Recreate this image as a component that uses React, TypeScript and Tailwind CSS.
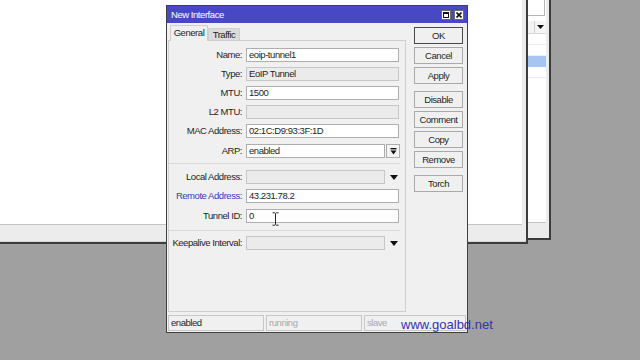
import React from "react";

type FieldProps = {
  value?: string;
  disabled?: boolean;
  short?: boolean;
};

function Field({ value = "", disabled = false, short = false }: FieldProps) {
  return (
    <div
      className={
        "h-[14px] border px-[2px] leading-[12px] whitespace-nowrap overflow-hidden " +
        (short ? "w-[139px] " : "w-[153px] ") +
        (disabled ? "bg-[#ebebeb] border-[#c6c6c6]" : "bg-white border-[#aeaeae]")
      }
    >
      {value}
    </div>
  );
}

function Row({
  label,
  blue = false,
  className = "",
  children,
}: {
  label: string;
  blue?: boolean;
  className?: string;
  children: React.ReactNode;
}) {
  return (
    <div className={"flex items-center h-[14px] " + className}>
      <div
        className={
          "w-[73px] text-right whitespace-nowrap leading-[14px] " +
          (blue ? "text-[#3a3ab6]" : "text-[#1e1e1e]")
        }
      >
        {label}
      </div>
      <div className="ml-[4px] flex items-center">{children}</div>
    </div>
  );
}

function DropButton() {
  return (
    <div className="ml-[1px] w-[14px] h-[14px] border border-[#aeaeae] bg-[#f4f4f4] flex items-center justify-center">
      <svg width="7" height="7" viewBox="0 0 7 7">
        <rect x="0.5" y="0" width="6" height="1.4" fill="#111" />
        <path d="M0.5 2.6h6L3.5 6.4z" fill="#111" />
      </svg>
    </div>
  );
}

function Arrow() {
  return (
    <svg className="ml-[5px]" width="8" height="5" viewBox="0 0 8 5">
      <path d="M0 0h8L4 5z" fill="#111" />
    </svg>
  );
}

function Btn({ label, main = false, className = "" }: { label: string; main?: boolean; className?: string }) {
  return (
    <div
      className={
        "h-[17px] border bg-[#f0f0f0] text-center leading-[15px] text-[#1e1e1e] " +
        (main ? "border-[#4a4a4a] " : "border-[#a9a9a9] ") +
        className
      }
    >
      {label}
    </div>
  );
}

function MainWindow() {
  return (
    <div className="absolute left-[-4px] top-[-4px] w-[532px] h-[248px] flex flex-col bg-[#ececec] border-r-2 border-b-2 border-[#3c3c3c]">
      <div className="flex-1 mr-[4px] bg-white border-b border-[#c4c4c4]" />
      <div className="h-[17px] border-b border-[#d6d6d6]" />
    </div>
  );
}

function ListWindow() {
  return (
    <div className="absolute left-[470px] top-[-4px] w-[81px] h-[244px] flex flex-col bg-[#ececec] border-r-2 border-b-2 border-[#3c3c3c]">
      <div className="mr-[3px] flex-1 flex flex-col bg-white border-b border-[#c4c4c4]">
        <div className="h-[20px] border border-[#b4b4b4] mr-[1px]" />
        <div className="h-[5px]" />
        <div className="h-[13px] flex bg-[#f4f4f4] border-b border-[#d8d8d8]">
          <div className="flex-1" />
          <div className="w-[12px] border-l border-[#d0d0d0] flex items-center justify-center">
            <svg width="7" height="4" viewBox="0 0 7 4">
              <path d="M0 0h7L3.5 4z" fill="#111" />
            </svg>
          </div>
        </div>
        <div className="h-[11px] border-b border-[#eeeeee]" />
        <div className="h-[11px] border-b border-[#eeeeee]" />
        <div className="h-[11px] bg-[#a7c5f2]" />
        <div className="h-[11px] border-b border-[#eeeeee]" />
      </div>
      <div className="h-[15px]" />
    </div>
  );
}

function Dialog() {
  return (
    <div className="absolute left-[166px] top-[5px] w-[302px] h-[328px] flex flex-col border border-[#404040] bg-[#f0f0f0]">
      <div className="h-[17px] flex items-center pl-[4px] pr-[3px] bg-[#4848c4] text-white">
        <span className="leading-[17px]">New Interface</span>
        <div className="ml-auto flex gap-[3px]">
          <div className="w-[10px] h-[10px] bg-white border border-[#6a6a6a] flex items-center justify-center">
            <div className="w-[6px] h-[6px] border border-t-2 border-[#111]" />
          </div>
          <div className="w-[10px] h-[10px] bg-white border border-[#6a6a6a] flex items-center justify-center">
            <svg width="6" height="6" viewBox="0 0 6 6">
              <path d="M0.5 0.5L5.5 5.5M5.5 0.5L0.5 5.5" stroke="#111" strokeWidth="1.6" />
            </svg>
          </div>
        </div>
      </div>

      <div className="flex-1 flex">
        <div className="w-[238px] ml-[1px] mb-[3px] flex flex-col">
          <div className="h-[17px] flex items-end pl-[2px]">
            <div className="h-[16px] w-[38px] -mb-[1px] z-10 border border-b-0 border-[#cfcfcf] bg-[#f0f0f0] text-center leading-[14px]">
              General
            </div>
            <div className="h-[12px] w-[32px] border border-b-0 border-[#cfcfcf] bg-[#dcdcdc] text-center leading-[11px]">
              Traffic
            </div>
          </div>
          <div className="flex-1 flex flex-col border border-[#cfcfcf]">
            <Row label="Name:" className="mt-[7px]">
              <Field value="eoip-tunnel1" />
            </Row>
            <Row label="Type:" className="mt-[5px]">
              <Field value="EoIP Tunnel" disabled />
            </Row>
            <Row label="MTU:" className="mt-[5px]">
              <Field value="1500" />
            </Row>
            <Row label="L2 MTU:" className="mt-[5px]">
              <Field disabled />
            </Row>
            <Row label="MAC Address:" className="mt-[5px]">
              <Field value="02:1C:D9:93:3F:1D" />
            </Row>
            <Row label="ARP:" className="mt-[6px]">
              <Field value="enabled" short />
              <DropButton />
            </Row>
            <div className="mt-[5px] mr-[5px] h-[1px] bg-[#d9d9d9]" />
            <Row label="Local Address:" className="mt-[6px]">
              <Field disabled short />
              <Arrow />
            </Row>
            <Row label="Remote Address:" blue className="mt-[5px]">
              <Field value="43.231.78.2" />
            </Row>
            <Row label="Tunnel ID:" className="mt-[6px]">
              <Field value="0" />
            </Row>
            <div className="mt-[7px] mr-[5px] h-[1px] bg-[#d9d9d9]" />
            <Row label="Keepalive Interval:" className="mt-[5px]">
              <Field disabled short />
              <Arrow />
            </Row>
          </div>
        </div>

        <div className="ml-[8px] w-[49px] pt-[4px] flex flex-col">
          <Btn label="OK" main />
          <Btn label="Cancel" className="mt-[3px]" />
          <Btn label="Apply" className="mt-[3px]" />
          <Btn label="Disable" className="mt-[7px]" />
          <Btn label="Comment" className="mt-[3px]" />
          <Btn label="Copy" className="mt-[3px]" />
          <Btn label="Remove" className="mt-[3px]" />
          <Btn label="Torch" className="mt-[7px]" />
        </div>
      </div>

      <div className="h-[16px] mb-[1px] ml-[1px] mr-[1px] flex gap-[2px]">
        <div className="w-[96px] border border-[#c8c8c8] px-[2px] leading-[14px]">enabled</div>
        <div className="w-[96px] border border-[#c8c8c8] px-[2px] leading-[14px] text-[#a8a8a8]">running</div>
        <div className="flex-1 border border-[#c8c8c8] px-[2px] leading-[14px] text-[#a8a8a8]">slave</div>
      </div>
    </div>
  );
}

export default function App() {
  return (
    <div className="relative w-[640px] h-[360px] overflow-hidden bg-[#a0a0a0] font-['Liberation_Sans',sans-serif] text-[9.5px] tracking-[-0.45px] text-[#1e1e1e]">
      <ListWindow />
      <MainWindow />
      <Dialog />
      <div className="absolute left-[401px] top-[317px] text-[13px] leading-[15px] tracking-normal text-[#3232b4]">
        www.goalbd.net
      </div>
      <svg className="absolute left-[272px] top-[212px]" width="7" height="14" viewBox="0 0 7 14">
        <path d="M0.5 0.8h2.2l0.8 0.8l0.8-0.8h2.2M3.5 1.6v10.8M0.5 13.2h2.2l0.8-0.8l0.8 0.8h2.2" stroke="#222" strokeWidth="1" fill="none" />
      </svg>
    </div>
  );
}
